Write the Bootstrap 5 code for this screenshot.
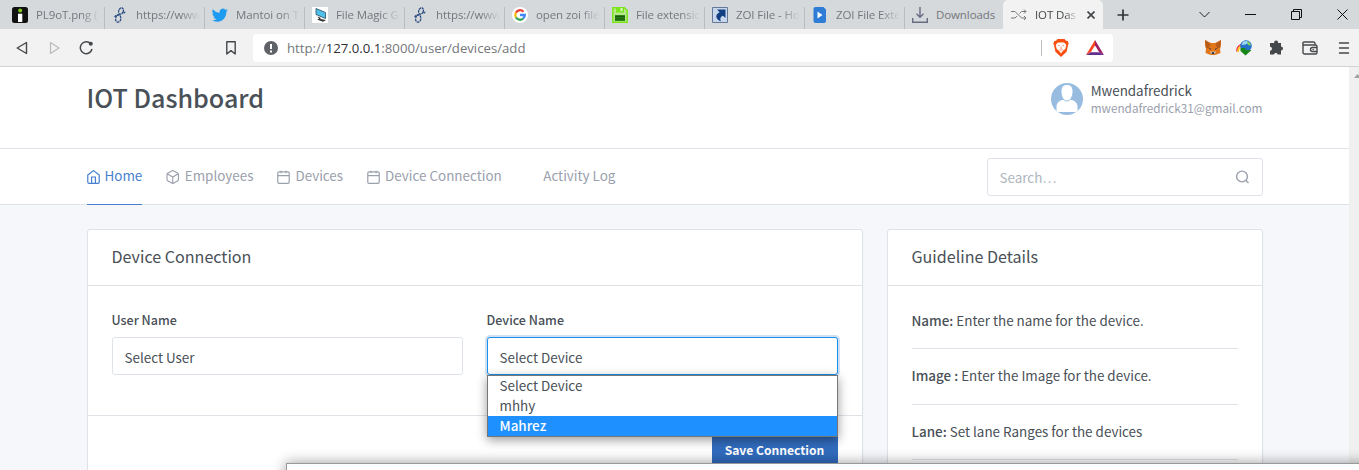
<!DOCTYPE html>
<html lang="en">
<head>
<meta charset="utf-8">
<title>IOT Dashboard</title>
<link href="https://cdn.jsdelivr.net/npm/bootstrap@5.3.0/dist/css/bootstrap.min.css" rel="stylesheet">
<style>
  body { font-family: "Noto Sans CJK JP", sans-serif; font-size: 13.43px; line-height: 24px; color: #495057; background: #fff; height: 470px; overflow: hidden; }
  svg { flex: none; display: block; }

  /* browser frame */
  .chrome-ui { font-family: "Open Sans", sans-serif; color: #74777b; }
  .tab-strip { height: 29px; background: #d5d9dc; }
  .tab-item { width: 100px; height: 29px; padding: 0 4px 0 8px; font-size: 11.5px; letter-spacing: -.1px; }
  .tab-item::after { content: ""; width: 1px; height: 22px; background: #b9bdc0; align-self: flex-end; margin-left: 4px; margin-right: -5px; flex: none; }
  .tab-item.current { background: #f2f2f2; border-radius: 5px 5px 0 0; color: #45484b; margin-left: -1px; }
  .tab-item.current::after, .tab-item.no-rule::after { background: transparent; }
  .tab-text { white-space: nowrap; width: 64px; margin-left: 8px; line-height: 29px; -webkit-mask-image: linear-gradient(90deg, #000 70%, transparent); mask-image: linear-gradient(90deg, #000 70%, transparent); }
  .tab-item.current .tab-text { width: 43px; }
  .tab-text.whole { -webkit-mask-image: none; mask-image: none; }
  .tool-row { height: 38px; background: #f2f2f2; border-bottom: 1px solid #d3d3d3; }
  .url-box { width: 860px; height: 28px; background: #fff; border-radius: 4px; font-size: 13.2px; line-height: 28px; }
  .url-box b { font-weight: 400; color: #303134; }

  /* page */
  .viewport-area { height: 403px; }
  .scroll-rail { width: 10px; background: #f0f0f0; }
  .wrap { width: 1200px; padding: 0 12px; margin: 0 auto; }
  .top-head { height: 82px; border-bottom: 1px solid #dee2e9; }
  .brand-title { font-size: 25.1px; font-weight: 500; line-height: 32px; margin: 14px 0 0; }
  .user-name { font-size: 13.4px; line-height: 15px; padding-bottom: 1px; }
  .user-mail { font-size: 11.75px; line-height: 17px; color: #9aa0ac; }
  .menu-bar { height: 56px; border-bottom: 1px solid #dee2e9; }
  .menu-bar .nav-link { padding: 0 0 3px; height: 56px; color: #9aa0ac; display: flex; align-items: center; gap: 5px; line-height: 20px; margin-right: 24px; border-bottom: 1px solid transparent; }
  .menu-bar .nav-link svg { margin-top: 3px; }
  .menu-bar .nav-link.active { color: #467fcf; border-color: #467fcf; }
  .search-field { width: 276px; height: 38px; border: 1px solid #dee2e9; border-radius: 3px; padding: 0 12px; color: #adb5bd; line-height: 22px; }
  .page-body { background: #f5f7fb; padding-top: 24px; height: 265px; }
  .panel { height: 400px; border: 1px solid #dee2e9; border-radius: 3px; box-shadow: 0 1px 2px rgba(0,0,0,.04); }
  .panel .card-header { height: 56px; background: #fff; border-color: #dfe3e8; padding: 0 24px; font-size: 16.1px; line-height: 52px; }
  .panel .card-body { padding: 24px; flex: none; }
  .field-label { font-size: 12.5px; font-weight: 500; line-height: 20px; margin-bottom: 7px; display: block; }
  .panel .form-control { font-family: inherit; font-size: 13.43px; color: #495057; height: 38px; padding: 2px 12px 0; line-height: 34px; border: 1px solid #dee2e9; border-radius: 3px; }
  .panel .form-control.is-open { border-color: #1991eb; box-shadow: 0 0 0 2px rgba(70,127,207,.25); }
  .option-menu { position: absolute; top: 38px; left: 0; width: 351px; z-index: 5; background: #fff; border: 1px solid #767676; box-shadow: 0 3px 10px rgba(0,0,0,.4); }
  .option-menu div { height: 20px; padding-left: 12px; line-height: 18px; }
  .option-menu .picked { background: #1e90ff; color: #fff; font-weight: 500; }
  .form-part { height: 130px; border-bottom: 1px solid #dfe3e8; }
  .save-btn { width: 126px; height: 36px; padding: 0; border: 0; border-radius: 0 0 3px 3px; background: #316cbe; color: #fff; font-size: 12.1px; font-weight: 700; line-height: 34px; }
  .save-btn:hover { background: #316cbe; color: #fff; }
  .guide-line { border-bottom: 1px solid #dee2e9; height: 56px; line-height: 20px; padding-top: 16px; }
  .guide-line:first-child { height: 39px; padding-top: 0; }
  .guide-line:last-child { height: 55px; }
  .guide-line b { font-weight: 500; }
  .window-edge { position: absolute; left: 286px; right: -20px; top: 463px; height: 20px; z-index: 9; background: #fff; border: 1px solid #999; box-shadow: 0 0 14px rgba(0,0,0,.4); }
</style>
</head>
<body class="position-relative">
<svg width="0" height="0" class="position-absolute">
  <symbol id="knot" viewBox="0 0 16 16"><g fill="none" stroke="#27477f" stroke-width="1.200" stroke-dasharray="2.600 .5"><ellipse cx="9" cy="4" rx="2.300" ry="3.300" transform="rotate(20 9 4)"/><ellipse cx="6.200" cy="11.600" rx="2.600" ry="3.600" transform="rotate(10 6.200 11.600)"/><path d="M7.500 7.500C5 8 3.500 8.500 2.600 10M11.500 5.500c.8.600 1.500.2 1.300-.8"/></g></symbol>
  <symbol id="cal" viewBox="2 1 20 22"><path d="M3 6a2 2 0 0 1 2-2h14a2 2 0 0 1 2 2v14a2 2 0 0 1-2 2H5a2 2 0 0 1-2-2zM16 2v4M8 2v4M3 10h18" fill="none" stroke="currentColor" stroke-width="1.900"/></symbol>
</svg>

<header class="chrome-ui">
  <div class="tab-strip d-flex ps-1">
    <div class="tab-item d-flex align-items-center"><svg width="16" height="16"><rect width="16" height="16" rx="2.500" fill="#111"/><circle cx="8.200" cy="3.600" r="2" fill="#82c91e"/><path d="M6 6.700h4.300V15H6z" fill="#fff"/></svg><span class="tab-text">PL9oT.png (</span></div>
    <div class="tab-item d-flex align-items-center"><svg width="16" height="16"><use href="#knot"/></svg><span class="tab-text">https://www</span></div>
    <div class="tab-item d-flex align-items-center"><svg width="16" height="16" viewBox="0 0 24 24"><path fill="#1d9bf0" d="M23.600 4.900c-.9.4-1.800.6-2.800.8 1-.6 1.800-1.600 2.200-2.700-1 .6-2 1-3.100 1.200a4.900 4.900 0 0 0-8.400 4.500C7.400 8.500 3.700 6.500 1.300 3.500a4.900 4.900 0 0 0 1.500 6.600c-.8 0-1.600-.2-2.200-.6v.1c0 2.300 1.700 4.300 3.900 4.800-.7.2-1.500.2-2.200.1.600 2 2.400 3.400 4.600 3.400A9.900 9.900 0 0 1 0 19.900a13.900 13.900 0 0 0 7.500 2.200c9.100 0 14-7.500 14-14v-.6c.8-.7 1.600-1.600 2.100-2.600z"/></svg><span class="tab-text">Mantoi on T</span></div>
    <div class="tab-item d-flex align-items-center"><svg width="16" height="16"><path d="M0 0h16v16H0z" fill="#fff"/><path d="M4 1.500l9.500 4v6L4 7.500z" fill="#4fc0ec" stroke="#294a5c" stroke-width=".8"/><path d="M5.500 9.500l3 1.200v1.300l5.500 1-3 1.800-6-2.300 2-.8z" fill="#333"/></svg><span class="tab-text">File Magic G</span></div>
    <div class="tab-item d-flex align-items-center"><svg width="16" height="16"><use href="#knot"/></svg><span class="tab-text">https://www</span></div>
    <div class="tab-item d-flex align-items-center"><svg width="16" height="16"><circle cx="8" cy="8" r="8" fill="#fff"/><g fill="none" stroke-width="2.300"><path d="M11.500 4.700A4.800 4.800 0 0 0 3.900 5.600" stroke="#ea4335"/><path d="M3.900 5.600a4.800 4.800 0 0 0 0 4.800" stroke="#fbbc05"/><path d="M3.900 10.400a4.800 4.800 0 0 0 7.200 1.200" stroke="#34a853"/><path d="M11.100 11.600A4.800 4.800 0 0 0 12.800 8H8" stroke="#4285f4"/></g></svg><span class="tab-text">open zoi file</span></div>
    <div class="tab-item d-flex align-items-center"><svg width="16" height="16"><path d="M.8.8H12.500L15.200 3.500V15.200H.8z" fill="#b8e58e" stroke="#7be61b" stroke-width="1.500"/><path d="M4 .5h8v5H4z" fill="#7be61b"/><path d="M8.500 1h2v3h-2z" fill="#dff5c8"/><path d="M3 8h10v6H3z" fill="#2e8615"/><path d="M3 9.700h10M3 12h10" stroke="#164f0b"/></svg><span class="tab-text">File extensio</span></div>
    <div class="tab-item d-flex align-items-center"><svg width="16" height="16"><path d="M.5.500h15v15H.5z" fill="#c9d7ec" stroke="#667899"/><path d="M5 2.500h8.500V11l-2.600-2.300C8 10 8 12 9 14.500 3 12 3 7.500 7.600 5.200z" fill="#123f83"/></svg><span class="tab-text">ZOI File - Ho</span></div>
    <div class="tab-item d-flex align-items-center"><svg width="16" height="16"><path d="M3.500 0h8L14 2.500V14a2 2 0 0 1-2 2H3.500a2 2 0 0 1-2-2V2a2 2 0 0 1 2-2z" fill="#2f7cd6"/><path d="M5.500 4.500l5 3.500-5 3.500z" fill="#fff"/></svg><span class="tab-text">ZOI File Exte</span></div>
    <div class="tab-item no-rule d-flex align-items-center"><svg width="16" height="16"><path d="M8 0v10M4.500 6.800L8 10.300l3.500-3.500M.7 11v4.200h14.600V11" fill="none" stroke="#696b80" stroke-width="1.400"/></svg><span class="tab-text whole">Downloads</span></div>
    <div class="tab-item current d-flex align-items-center"><svg width="16" height="16"><path d="M0 4.500h4L10.500 11H15M0 11h4l2-2M8.500 6.500l2-2H15M13 2.500l2 2-2 2M13 9l2 2-2 2" fill="none" stroke="#77797b"/></svg><span class="tab-text">IOT Das</span><svg width="8" height="8" viewBox="0 0 8 8" style="margin-left:9px"><path d="M.5.500l7 7M7.500.500l-7 7" stroke="#45484b" stroke-width="1.700"/></svg></div>
    <svg width="12" height="12" class="align-self-center" style="margin-left:14px;margin-top:1px"><path d="M6 .5v11M.5 6h11" stroke="#333" stroke-width="1.700"/></svg>
    <div class="d-flex align-items-center ms-auto" style="gap:35px;padding-right:11px">
      <svg width="11" height="11"><path d="M.5 3L5.500 8l5-5" fill="none" stroke="#222"/></svg>
      <svg width="11" height="11"><path d="M0 5.500h11" stroke="#111"/></svg>
      <svg width="11" height="11"><path d="M.5 2.500h8v8h-8zM2.500 2.500v-2h8v8h-2" fill="none" stroke="#111"/></svg>
      <svg width="11" height="11"><path d="M.5.500l10 10M10.500.500l-10 10" stroke="#111"/></svg>
    </div>
  </div>
  <div class="tool-row d-flex align-items-center">
    <svg width="12" height="14" style="margin-left:16px"><path d="M10.500 1.500v11L1.200 7z" fill="none" stroke="#45484b" stroke-width="1.400" stroke-linejoin="round"/></svg>
    <svg width="12" height="14" style="margin-left:21px"><path d="M1.500 1.500v11L10 7z" fill="none" stroke="#bcbcbc" stroke-width="1.300" stroke-linejoin="round"/></svg>
    <svg width="14" height="14" style="margin-left:18px"><path d="M11.800 3A5.900 5.900 0 1 0 13 8" fill="none" stroke="#45484b" stroke-width="1.500"/><circle cx="11.800" cy="2.800" r="2" fill="#45484b"/></svg>
    <svg width="10" height="14" style="margin-left:133px"><path d="M.8.800h8.400v12.200L5 9.600.8 13z" fill="none" stroke="#45484b" stroke-width="1.400" stroke-linejoin="round"/></svg>
    <div class="url-box d-flex align-items-center" style="margin-left:17px">
      <svg width="14" height="14" style="margin-left:11px"><circle cx="7" cy="7" r="7" fill="#5f6368"/><path d="M6 3h2v5H6zM6 9.500h2v2H6z" fill="#fff"/></svg>
      <span style="margin-left:9px">http://<b>127.0.0.1</b>:8000/user/devices/add</span>
      <svg width="1" height="16" class="ms-auto"><path d="M0 0h1v16H0z" fill="#bdbdbd"/></svg>
      <svg width="16" height="18" style="margin-left:11px" viewBox="0 0 16 18"><path d="M4.500 0h7l1.500 1.700 1.700.3 1 2.600-.7 1.700-1.400 6.500L8 18l-5.600-5.200L1 6.300.300 4.600l1-2.600L3 1.700z" fill="#fb4f12"/><path d="M5 3.500h6l2.300 2.200-1 4.300L9.700 12 8 14.500 6.300 12 3.700 10l-1-4.300z" fill="#fff"/><path d="M4.800 6.200l2 .6M11.200 6.200l-2 .6M8 7.500v2.500M6.300 10.500l1.700.8 1.700-.8" fill="none" stroke="#fb7a58" stroke-width=".8"/></svg>
      <svg width="18" height="15" style="margin:0 9px 0 17px"><path d="M9 0L0 15l4.800-2.800L9 5.200z" fill="#ff4724"/><path d="M9 0l9 15-4.800-2.800L9 5.200z" fill="#9e1f63"/><path d="M0 15h18l-4.800-2.800H4.800z" fill="#662d91"/></svg>
    </div>
    <div class="d-flex align-items-center ms-auto" style="padding-right:10px">
      <svg width="16" height="15"><path d="M0 0l6 3h4l6-3v5l-1 4 .5 4-4 1.500L10 15H6l-1.500-.5L.5 13 1 9 0 5z" fill="#e2761b"/><path d="M0 0l5.500 4L4 8H1zM16 0l-5.500 4L12 8h3z" fill="#b85c1c"/><path d="M3.500 8l2.500.8-.5 1.200zM12.500 8L10 8.800l.5 1.200z" fill="#24323f"/><path d="M5 11.500h6L10 14H6z" fill="#d7c1b3"/><path d="M6.800 12.200h2.400V14H6.800z" fill="#333"/></svg>
      <svg width="17" height="16" style="margin-left:15px"><path d="M1 11.500A6 6 0 0 1 7 4.500" stroke="#e34" stroke-width="1.500" fill="none"/><path d="M2.300 12A5 5 0 0 1 8 6" stroke="#fc2" stroke-width="1.800" fill="none"/><circle cx="10" cy="6" r="5.800" fill="#2371c9"/><path d="M7 1.500l4-.5 1.500 2-3 1.500L5.500 5z" fill="#9fd8f5"/><path d="M11 1.200l3 1.500 1 3-3-.7z" fill="#80d35b"/><path d="M4.500 8h5v2h6L9.500 15.500 4.500 11z" fill="#178617"/></svg>
      <svg width="15" height="15" style="margin-left:16px"><path d="M1 3h4.200a2 2 0 1 1 3.800 0H12v3.500a2 2 0 1 1 0 4V14.500H8.700a1.900 1.900 0 0 0-3.700 0H1V10.700a2 2 0 0 0 0-4z" fill="#45484b"/></svg>
      <svg width="16" height="14" style="margin-left:18px"><path d="M13 4V2.500A1.500 1.500 0 0 0 11.500 1H2.300a1.500 1.500 0 0 0 0 3H13.500A1.500 1.500 0 0 1 15 5.500V11.500A1.500 1.500 0 0 1 13.500 13H2.500A1.500 1.500 0 0 1 1 11.500V2.500M15 6.500H10.500a2 2 0 0 0 0 4H15" fill="none" stroke="#45484b" stroke-width="1.400"/><circle cx="11.200" cy="8.500" r=".8" fill="#45484b"/></svg>
      <svg width="10" height="12" style="margin-left:21px"><path d="M0 1h10M0 6h10M0 11h10" stroke="#45484b" stroke-width="1.400"/></svg>
    </div>
  </div>
</header>

<div class="viewport-area d-flex overflow-hidden">
  <main class="flex-grow-1">
    <div class="top-head">
      <div class="wrap d-flex justify-content-between">
        <h1 class="brand-title">IOT Dashboard</h1>
        <div class="d-flex gap-2" style="padding-top:16px">
          <svg width="32" height="32"><clipPath id="disc"><circle cx="16" cy="16" r="16"/></clipPath><g clip-path="url(#disc)"><path d="M0 0h32v32H0z" fill="#97bce0"/><path d="M5.500 29v-5c0-4 2.500-6.500 6-7h9c3.500.5 6 3 6 7v5z" fill="#fff"/><path d="M16 1.500c4 0 6.300 3 6 7.500-.3 5-2.500 9-6 9s-5.700-4-6-9c-.3-4.500 2-7.500 6-7.500z" fill="#fff" stroke="#97bce0"/></g></svg>
          <div><div class="user-name">Mwendafredrick</div><div class="user-mail">mwendafredrick31@gmail.com</div></div>
        </div>
      </div>
    </div>
    <div class="menu-bar">
      <div class="wrap d-flex">
        <nav class="nav">
          <a class="nav-link active" href="#"><svg width="13" height="14" viewBox="2 1 20 22"><path d="M3 9l9-7 9 7v11a2 2 0 0 1-2 2H5a2 2 0 0 1-2-2zM9 22V12h6v10" fill="none" stroke="currentColor" stroke-width="1.900"/></svg>Home</a>
          <a class="nav-link" href="#"><svg width="13.5" height="14" viewBox="2 1 20 22"><path d="M21 16V8a2 2 0 0 0-1-1.730l-7-4a2 2 0 0 0-2 0l-7 4A2 2 0 0 0 3 8v8a2 2 0 0 0 1 1.730l7 4a2 2 0 0 0 2 0l7-4A2 2 0 0 0 21 16zM3.270 6.960L12 12.010l8.730-5.050M12 22.080V12" fill="none" stroke="currentColor" stroke-width="1.800"/></svg>Employees</a>
          <a class="nav-link" href="#"><svg width="13" height="14"><use href="#cal"/></svg>Devices</a>
          <a class="nav-link" href="#"><svg width="13" height="14"><use href="#cal"/></svg>Device Connection</a>
          <a class="nav-link" href="#" style="margin-left:17.5px">Activity Log</a>
        </nav>
        <div class="search-field d-flex align-items-center justify-content-between ms-auto" style="margin-top:9px"><span>Search…</span><svg width="15" height="15" viewBox="0 0 15 15"><circle cx="7" cy="6.500" r="5.400" fill="none" stroke="#9aa0ac" stroke-width="1.400"/><path d="M10.800 10.300l2.700 2.700" stroke="#9aa0ac" stroke-width="1.400"/></svg></div>
      </div>
    </div>
    <div class="page-body">
      <div class="wrap">
        <div class="row">
          <div class="col-8">
            <div class="card panel">
              <div class="card-header">Device Connection</div>
              <div class="card-body form-part">
                <div class="row">
                  <div class="col-6"><label class="field-label">User Name</label><div class="form-control">Select User</div></div>
                  <div class="col-6"><label class="field-label">Device Name</label>
                    <div class="position-relative"><div class="form-control is-open">Select Device</div>
                      <div class="option-menu"><div>Select Device</div><div>mhhy</div><div class="picked">Mahrez</div></div>
                    </div>
                  </div>
                </div>
              </div>
              <div class="d-flex justify-content-end px-4 pt-3"><button class="btn save-btn">Save Connection</button></div>
            </div>
          </div>
          <div class="col-4">
            <div class="card panel">
              <div class="card-header">Guideline Details</div>
              <div class="card-body">
                <div class="guide-line"><b>Name:</b> Enter the name for the device.</div>
                <div class="guide-line"><b>Image :</b> Enter the Image for the device.</div>
                <div class="guide-line"><b>Lane:</b> Set lane Ranges for the devices</div>
              </div>
            </div>
          </div>
        </div>
      </div>
    </div>
  </main>
  <div class="scroll-rail"><svg width="10" height="20"><path d="M5 11L8.500 7 10 8.500V11z" fill="#a3a3a3"/></svg></div>
</div>
<div class="window-edge"></div>
<script src="https://cdn.jsdelivr.net/npm/bootstrap@5.3.0/dist/js/bootstrap.bundle.min.js"></script>
</body>
</html>
